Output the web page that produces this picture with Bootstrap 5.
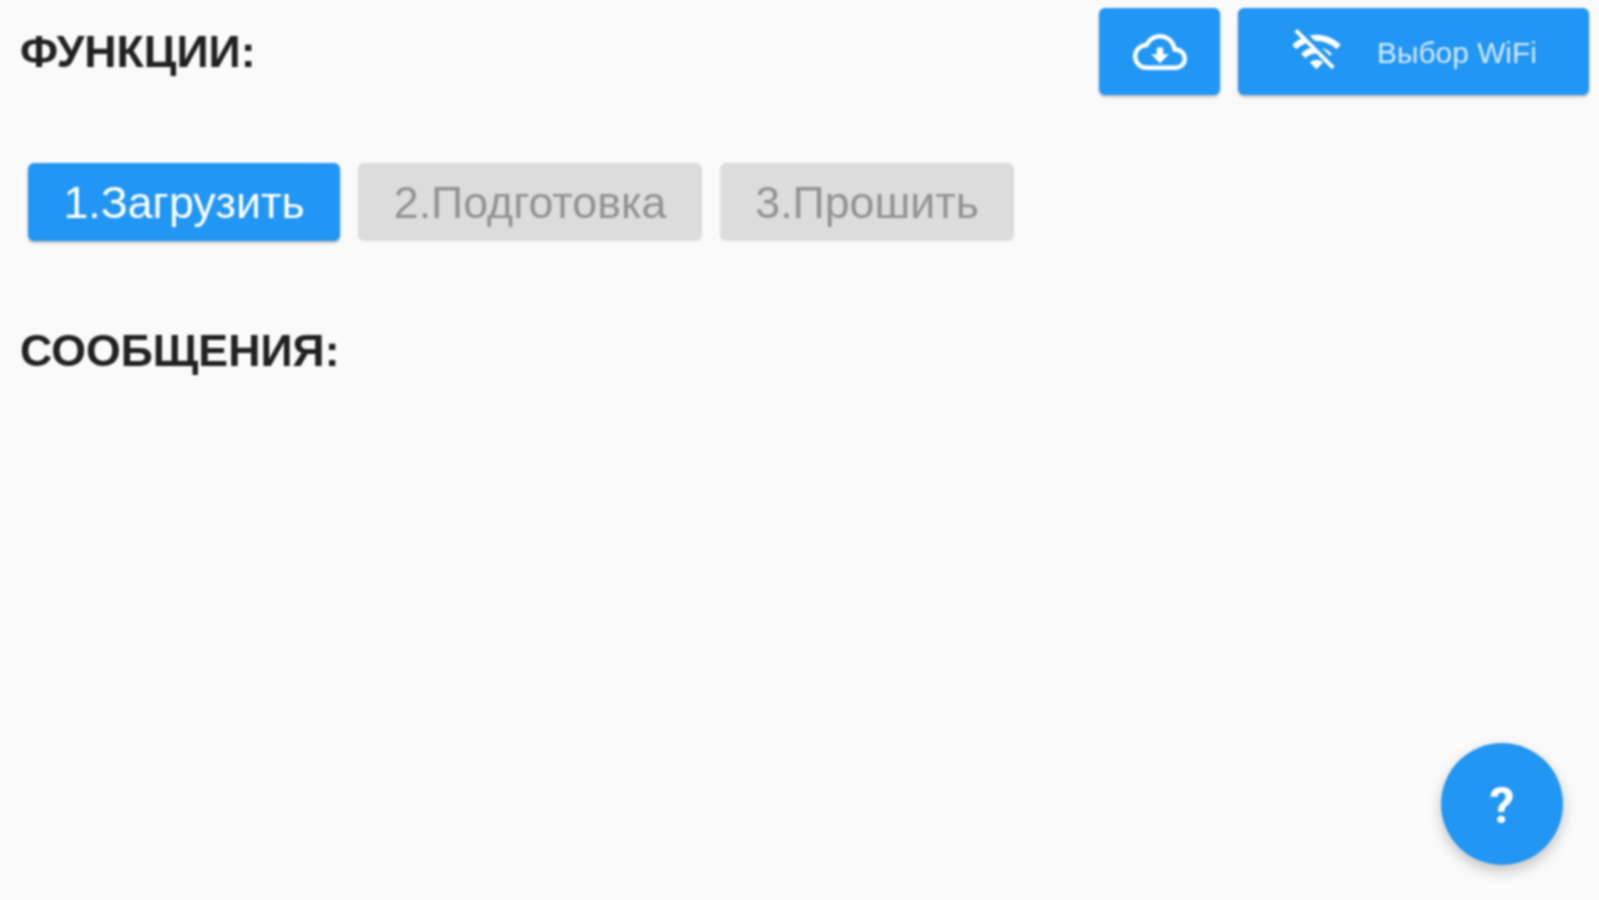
<!DOCTYPE html>
<html lang="ru">
<head>
  <meta charset="UTF-8" />
  <meta name="viewport" content="width=device-width, initial-scale=1" />
  <title>Функции</title>
  <link href="https://cdn.jsdelivr.net/npm/bootstrap@5.3.0/dist/css/bootstrap.min.css" rel="stylesheet" />
  <style>
    html, body { height: 100%; }
    body { background: #fafafa; font-family: "Liberation Sans", sans-serif; color: #212121; overflow: hidden; }
    .page-wrap { height: 900px; position: relative; filter: blur(1px); }
    .head-bar { height: 103px; padding: 8px 10px 8px 20px; box-shadow: 0 1px 2px rgba(0,0,0,.03); }
    .head-title { font-family: "Liberation Sans", sans-serif; font-size: 44.7px; font-weight: 700; line-height: 1; margin: 2px 0 0; color: #212121; }
    .head-msg { height: 103px; padding-left: 20px; margin-top: 58px; box-shadow: 0 1px 2px rgba(0,0,0,.03); }
    .blue-btn { background: #2196f3; color: #fff; border: 0; border-radius: 6px; box-shadow: 0 2px 3px rgba(0,0,0,.25); }
    .blue-btn:hover { background: #2196f3; color: #fff; }
    .top-btn { height: 87px; }
    .top-gap { gap: 18px; }
    .cloud-btn { width: 121px; }
    .wifi-btn { width: 351px; font-size: 29.9px; gap: 34px; color: #d5eafc; }
    .wifi-label { padding-top: 3px; }
    .steps { padding: 60px 28px 0; gap: 18px; }
    .step-btn { height: 78px; padding: 2px 35.5px 0; font-size: 44.7px; line-height: 1; border: 0; border-radius: 6px; }
    .step-off, .step-off:disabled { background: #dcdcdc; color: #929292; opacity: 1; }
    .help-fab { position: absolute; left: 1441px; top: 743px; width: 122px; height: 122px; padding: 4px 0 0; font-family: Roboto, sans-serif; font-size: 50px; font-weight: 700; line-height: 1; }
    .help-fab.blue-btn { border-radius: 50%; box-shadow: 0 6px 14px rgba(0,0,0,.22); }
  </style>
</head>
<body>
<div class="page-wrap">
  <div class="head-bar d-flex justify-content-between align-items-center">
    <h2 class="head-title">ФУНКЦИИ:</h2>
    <div class="d-flex top-gap">
      <button class="btn blue-btn top-btn cloud-btn d-flex align-items-center justify-content-center p-0" type="button" aria-label="Загрузить">
        <svg width="54" height="54" viewBox="0 0 24 24" fill="#fff"><path d="M19.35 10.04C18.67 6.59 15.64 4 12 4 9.11 4 6.6 5.64 5.35 8.04 2.34 8.36 0 10.91 0 14c0 3.31 2.69 6 6 6h13c2.76 0 5-2.24 5-5 0-2.64-2.05-4.78-4.65-4.96zM19 18H6c-2.21 0-4-1.79-4-4 0-2.05 1.53-3.76 3.56-3.97l1.07-.11.5-.95C8.08 7.14 9.94 6 12 6c2.62 0 4.88 1.86 5.39 4.43l.3 1.5 1.53.11c1.56.1 2.78 1.41 2.78 2.96 0 1.65-1.35 3-3 3zm-5.55-8h-2.9v3H8l4 4 4-4h-2.55z"/></svg>
      </button>
      <button class="btn blue-btn top-btn wifi-btn d-flex align-items-center justify-content-center p-0" type="button">
        <svg width="53" height="53" viewBox="0 0 24 24" fill="#fff"><path d="M22.99 9C19.15 5.16 13.8 3.76 8.84 4.78l2.52 2.52c3.47-.17 6.99 1.05 9.63 3.7l2-2zm-4 4c-1.29-1.29-2.84-2.13-4.49-2.56l3.53 3.53.96-.97zM2 3.05L5.07 6.1C3.6 6.82 2.22 7.78 1 9l1.99 2c1.24-1.24 2.67-2.16 4.2-2.77l2.24 2.24C7.81 10.89 6.27 11.73 5 13v.01L6.99 15c1.36-1.36 3.14-2.04 4.92-2.06L18.98 20l1.27-1.26L3.29 1.79 2 3.05zM9 17l3 3 3-3c-1.65-1.66-4.34-1.66-6 0z"/></svg>
        <span class="wifi-label">Выбор WiFi</span>
      </button>
    </div>
  </div>

  <div class="steps d-flex">
    <button class="btn blue-btn step-btn" type="button">1.Загрузить</button>
    <button class="btn step-btn step-off" type="button" disabled>2.Подготовка</button>
    <button class="btn step-btn step-off" type="button" disabled>3.Прошить</button>
  </div>

  <div class="head-msg d-flex align-items-center">
    <h2 class="head-title">СООБЩЕНИЯ:</h2>
  </div>

  <button class="btn blue-btn help-fab" type="button">?</button>
</div>
<script src="https://cdn.jsdelivr.net/npm/bootstrap@5.3.0/dist/js/bootstrap.bundle.min.js"></script>
</body>
</html>
